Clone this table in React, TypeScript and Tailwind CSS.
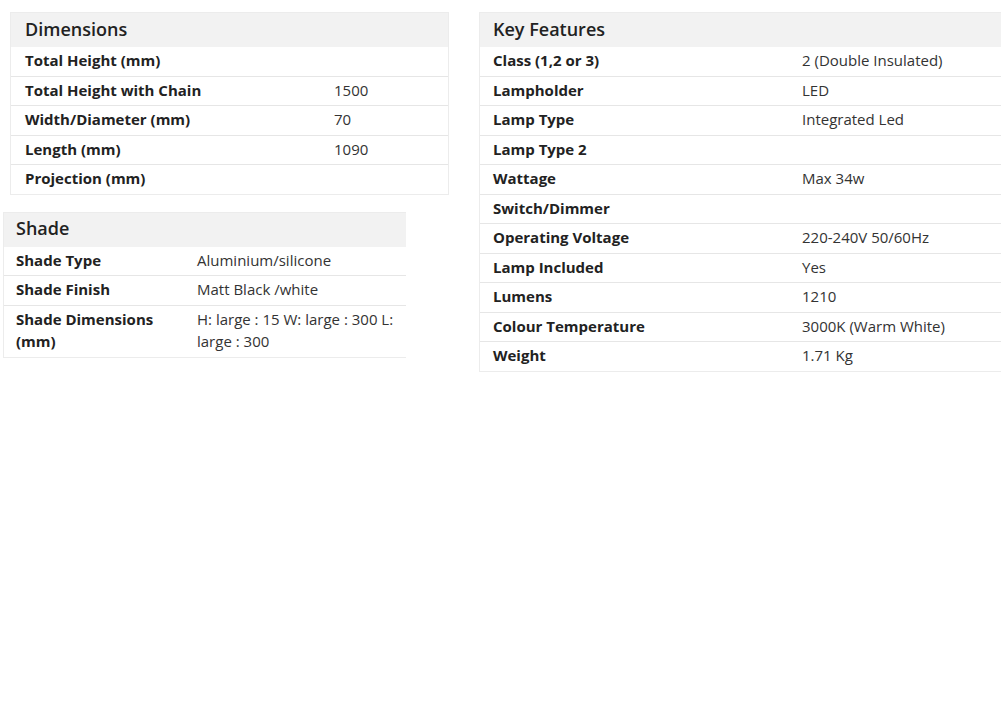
import React from "react";

type Row = [string, string];

function SpecTable({
  title,
  rows,
  width,
  labelWidth,
  valueWidth,
  noRight,
  pad,
}: {
  title: string;
  rows: Row[];
  width: string;
  labelWidth: string;
  valueWidth?: string;
  noRight?: boolean;
  pad: string;
}) {
  return (
    <div
      className={`${width} border border-[#ececec] ${noRight ? "border-r-0" : ""} bg-white`}
    >
      <div className={`h-[34px] bg-[#f2f2f2] ${pad} pb-[2px] flex items-center text-[18px] font-semibold text-[#222]`}>
        {title}
      </div>
      {rows.map(([k, v], i) => (
        <div
          key={i}
          className={`flex pt-[2px] pb-[4px] leading-[22.5px] text-[15px] ${i < rows.length - 1 ? "border-b border-[#e6e6e6]" : ""}`}
        >
          <div className={`${labelWidth} shrink-0 ${pad} pr-2 font-bold text-[#222]`}>{k}</div>
          <div className={`${valueWidth ?? ""} text-[#333]`}>{v}</div>
        </div>
      ))}
    </div>
  );
}

export default function App() {
  return (
    <div
      className="w-[1001px] h-[719px] overflow-hidden bg-white flex pt-[12px] pl-[3px]"
      style={{ fontFamily: '"Open Sans", "Noto Sans", sans-serif' }}
    >
      <div className="flex flex-col w-[446px] shrink-0">
        <div className="ml-[7px]">
          <SpecTable
            title="Dimensions"
            width="w-[439px]"
            labelWidth="w-[323px]"
            pad="pl-[14px]"
            rows={[
              ["Total Height (mm)", ""],
              ["Total Height with Chain", "1500"],
              ["Width/Diameter (mm)", "70"],
              ["Length (mm)", "1090"],
              ["Projection (mm)", ""],
            ]}
          />
        </div>
        <div className="mt-[17px]">
          <SpecTable
            title="Shade"
            width="w-[403px]"
            labelWidth="w-[193px]"
            valueWidth="w-[200px]"
            pad="pl-[12px]"
            noRight
            rows={[
              ["Shade Type", "Aluminium/silicone"],
              ["Shade Finish", "Matt Black /white"],
              ["Shade Dimensions (mm)", "H: large : 15 W: large : 300 L: large : 300"],
            ]}
          />
        </div>
      </div>
      <div className="ml-[30px] shrink-0">
        <SpecTable
          title="Key Features"
          width="w-[560px]"
          labelWidth="w-[322px]"
          pad="pl-[13px]"
          rows={[
            ["Class (1,2 or 3)", "2 (Double Insulated)"],
            ["Lampholder", "LED"],
            ["Lamp Type", "Integrated Led"],
            ["Lamp Type 2", ""],
            ["Wattage", "Max 34w"],
            ["Switch/Dimmer", ""],
            ["Operating Voltage", "220-240V 50/60Hz"],
            ["Lamp Included", "Yes"],
            ["Lumens", "1210"],
            ["Colour Temperature", "3000K (Warm White)"],
            ["Weight", "1.71 Kg"],
          ]}
        />
      </div>
    </div>
  );
}
